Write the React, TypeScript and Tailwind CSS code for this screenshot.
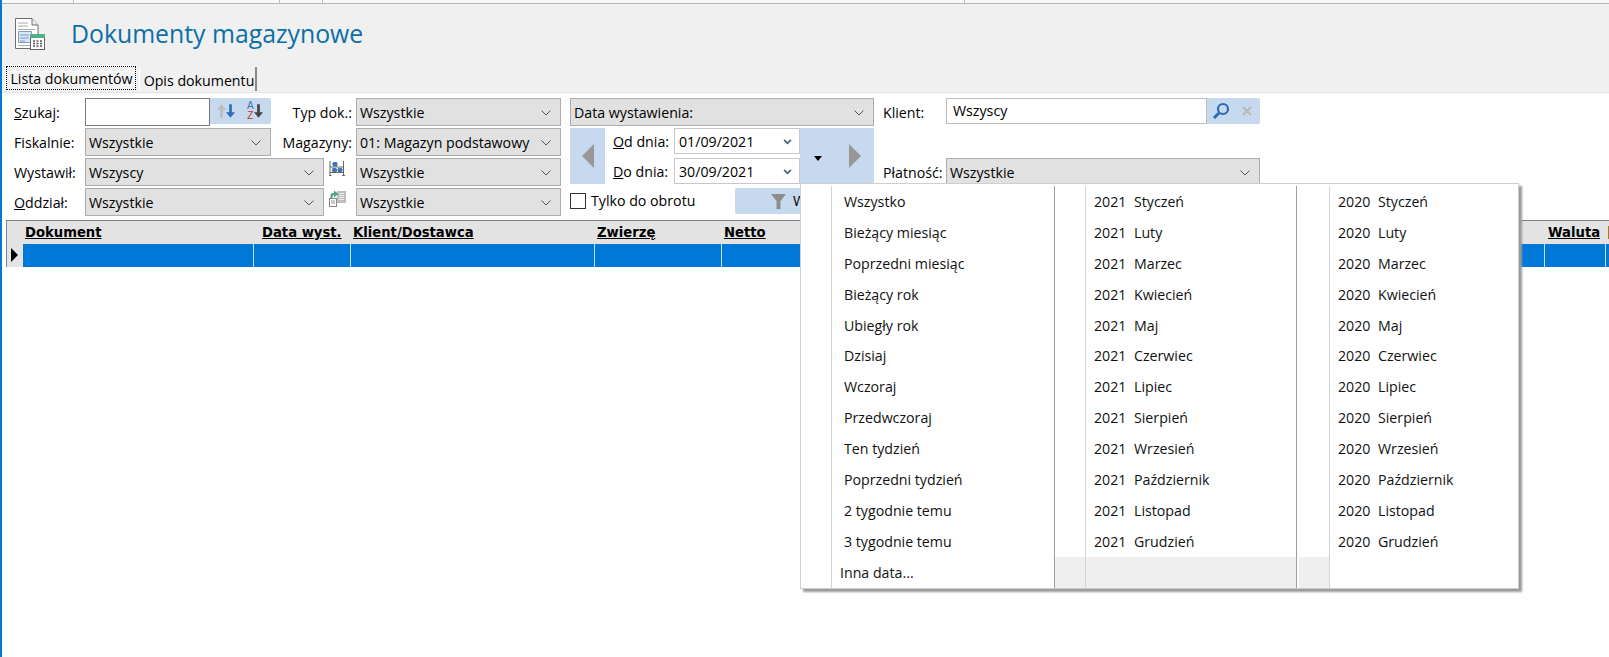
import type { ReactNode } from 'react'

const fontUi = "font-['Open_Sans','Noto_Sans',sans-serif]"

const menuLeft = [
  'Wszystko',
  'Bieżący miesiąc',
  'Poprzedni miesiąc',
  'Bieżący rok',
  'Ubiegły rok',
  'Dzisiaj',
  'Wczoraj',
  'Przedwczoraj',
  'Ten tydzień',
  'Poprzedni tydzień',
  '2 tygodnie temu',
  '3 tygodnie temu',
]

const months = [
  'Styczeń',
  'Luty',
  'Marzec',
  'Kwiecień',
  'Maj',
  'Czerwiec',
  'Lipiec',
  'Sierpień',
  'Wrzesień',
  'Październik',
  'Listopad',
  'Grudzień',
]

const columns = [
  { label: 'Dokument', width: 'w-[231px]', pad: 'pl-[2px]' },
  { label: 'Data wyst.', width: 'w-[97px]', pad: 'pl-[8px]' },
  { label: 'Klient/Dostawca', width: 'w-[244px]', pad: 'pl-[2px]' },
  { label: 'Zwierzę', width: 'w-[127px]', pad: 'pl-[2px]' },
  { label: 'Netto', width: 'w-[823px]', pad: 'pl-[2px]' },
  { label: 'Waluta', width: 'w-[61px]', pad: 'pl-[3px]' },
]

function Chevron() {
  return (
    <svg viewBox="0 0 10 6" className="w-[10px] h-[6px] shrink-0" fill="none" stroke="#555" strokeWidth="1">
      <path d="M.5.5 5 5 9.5.5" />
    </svg>
  )
}

function Combo({ value, className = '' }: { value: string; className?: string }) {
  return (
    <div className={`h-[28px] flex items-center justify-between pl-[3px] pr-[9px] pt-[2px] bg-[#e1e1e1] border border-[#adadad] text-[14.2px] ${className}`}>
      <span>{value}</span>
      <Chevron />
    </div>
  )
}

function Label({ children, className = '' }: { children: ReactNode; className?: string }) {
  return <div className={`h-[28px] pt-[2px] flex items-center text-[14.2px] ${className}`}>{children}</div>
}

function DateInput({ value }: { value: string }) {
  return (
    <div className="w-[126px] h-[26px] flex items-center justify-between pl-[4px] pr-[7px] pt-[2px] bg-white border border-[#c8c8c8] text-[14.2px]">
      <span>{value}</span>
      <svg viewBox="0 0 10 7" className="w-[9px] h-[6px]" fill="none" stroke="#47597d" strokeWidth="1.8">
        <path d="M1 1l4 4 4-4" />
      </svg>
    </div>
  )
}

function DocIcon() {
  return (
    <svg viewBox="0 0 30 32" className="w-[30px] h-[32px]">
      <path d="M.5.5H17L23 7V30.5H.5Z" fill="#fff" stroke="#6f6f6f" />
      <path d="M17 .5V7H23" fill="#eee" stroke="#6f6f6f" />
      <path d="M3 5h10M3 8h10" stroke="#aaa" />
      <path d="M3 11.500h17" stroke="#aaa" />
      <path d="M3.500 13.500h13v11h-13z" fill="#dbe5f3" stroke="#7d9cc9" />
      <path d="M5 17h9M5 20h9M5 23h5" stroke="#7d9cc9" />
      <path d="M3 27.500h12" stroke="#aaa" />
      <rect x="15.500" y="16.500" width="14" height="15" fill="#fff" stroke="#666" />
      <rect x="15" y="16" width="15" height="4" fill="#54ae88" />
      <path d="M18 23h2M21.500 23h2M25 23h2M18 25.500h2M21.500 25.500h2M25 25.500h2M18 28h2M21.500 28h2M25 28h2" stroke="#555" strokeWidth="1.300" />
    </svg>
  )
}

function Arrow({ color, up }: { color: string; up?: boolean }) {
  return (
    <svg viewBox="0 0 10 15" className="w-[9px] h-[16px] shrink-0">
      <path
        d={up ? 'M5 0 10 6H6.500V15H3.500V6H0Z' : 'M5 15 10 9H6.500V0H3.500V9H0Z'}
        fill={color}
      />
    </svg>
  )
}

function ShelfIcon() {
  return (
    <svg viewBox="0 0 16 15" className="w-[16px] h-[15px]">
      <path d="M1 0V14M14.500 0V14M1 6H14.500M1 11.500H14.500M0 14.500H2.500M13 14.500H16" stroke="#666" strokeWidth="1" fill="none" />
      <rect x="3.500" y="1" width="5" height="4.500" rx="1.500" fill="#3e74b5" />
      <rect x="3" y="7" width="5" height="4" rx="1.500" fill="#3e74b5" />
      <rect x="8.500" y="7" width="5" height="4" rx="1.500" fill="#3e74b5" />
    </svg>
  )
}

function TransferIcon() {
  return (
    <svg viewBox="0 0 17 17" className="w-[17px] h-[17px]">
      <rect x="8" y="1" width="9" height="12" fill="#bdbdbd" />
      <path d="M10 3.500h5M10 5.500h5M10 7.500h5M10 9.500h5" stroke="#eee" />
      <rect x=".5" y="8.500" width="7" height="8" fill="#fff" stroke="#888" />
      <path d="M2 11h4M2 13h4" stroke="#999" />
      <path d="M1.500 8V5C1.500 3.500 3 3 5 3V.5L9.500 4 5 7.500V5C4 5 3.500 6 3.500 8Z" fill="#4fa584" />
    </svg>
  )
}

function MenuColumn({ grayLast, children, className = '' }: { grayLast: boolean; children: ReactNode; className?: string }) {
  return (
    <div className={`flex flex-col h-full ${className}`}>
      {children}
      <div className={`h-[31px] flex ${grayLast ? 'bg-[#efefef]' : ''}`}>
        <div className="w-[31px] shrink-0 bg-[#efefef] border-r border-[#d4d4d4]" />
      </div>
    </div>
  )
}

function MenuItem({ children }: { children: ReactNode }) {
  return (
    <div className="h-[31px] flex items-center text-[14.2px]">
      <div className="w-[31px] h-full shrink-0 border-r border-[#d4d4d4]" />
      {children}
    </div>
  )
}

function YearColumn({ year, className }: { year: number; className: string }) {
  return (
    <MenuColumn grayLast={year === 2021} className={className}>
      {months.map((m) => (
        <MenuItem key={m}>
          <span className="ml-[8px] w-[40px] shrink-0">{year}</span>
          <span>{m}</span>
        </MenuItem>
      ))}
    </MenuColumn>
  )
}

function DateMenu() {
  return (
    <div className="absolute left-[800px] top-[183px] w-[719px] h-[406px] bg-white border border-[#cfcfcf] shadow-[3px_3px_2px_#9a9a9a] pt-[2px] flex text-[#111]">
      <div className="w-[254px] shrink-0 flex flex-col border-r border-[#9f9f9f]">
        {menuLeft.map((m) => (
          <MenuItem key={m}>
            <span className="ml-[12px]">{m}</span>
          </MenuItem>
        ))}
        <MenuItem>
          <span className="ml-[8px]">Inna data...</span>
        </MenuItem>
      </div>
      <YearColumn year={2021} className="w-[242px] shrink-0 border-r border-[#9f9f9f]" />
      <YearColumn year={2020} className="flex-1 ml-[2px]" />
    </div>
  )
}

export default function App() {
  return (
    <div className={`relative w-[1609px] h-[657px] overflow-hidden bg-white text-black flex ${fontUi}`}>
      <div className="w-[2px] bg-[#0078d7] shrink-0" />
      <div className="flex-1 min-w-0 flex flex-col">
        {/* Strip of the window behind */}
        <div className="h-[4px] bg-[#f8f8f8] border-b border-[#b5b5b5] flex">
          <div className="w-[72px] border-r border-[#bdbdbd]" />
          <div className="w-[206px] border-r border-[#bdbdbd]" />
          <div className="w-[43px] border-r border-[#bdbdbd]" />
          <div className="w-[642px] border-r border-[#bdbdbd]" />
        </div>

        {/* Title */}
        <div className="h-[88px] bg-[#f0f0f0]">
          <div className="flex items-center h-[60px] pl-[13px] gap-[27px]">
            <DocIcon />
            <h1 className="text-[24.8px] leading-none text-[#0d6fa8] -ml-[1px] -mt-[1px]">Dokumenty magazynowe</h1>
          </div>
          {/* Tabs */}
          <div className="flex items-start pl-[3px] h-[28px] text-[14.2px]">
            <div className="w-[132px] h-[26px] mt-[1px] bg-[#f4f4f4] border-t border-l border-white outline-1 outline-dotted outline-offset-[-2px] outline-black flex items-center justify-center">Lista dokumentów</div>
            <div className="w-[118px] h-[24px] mt-[3px] ml-[2px] pl-[3px] pt-[3px] bg-[#f0f0f0] border-l border-white border-r-2 border-r-[#8a8a8a] flex items-center justify-center">Opis dokumentu</div>
          </div>
        </div>
        <div className="h-[3px] bg-[#fafafa] border-t border-[#e4e4e4]" />

        {/* Filters */}
        <div className="pl-[4px] pt-[3px]">
          <div className="grid grid-cols-[71px_186px_85px_205px_9px_304px_72px_314px] grid-rows-[30px_30px_30px_30px] pl-[8px]">
            <Label><span><u>S</u>zukaj:</span></Label>
            <div className="flex h-[28px]">
              <div className="w-[125px] bg-white border border-[#7a7a7a]" />
              <div className="flex-1 h-[26px] bg-[#c6d9ee] rounded-r-[2px] flex items-center pl-[7px]">
                <Arrow color="#bdbdbd" up />
                <Arrow color="#2f6fb7" />
                <div className="ml-[12px] flex flex-col items-center text-[10px] leading-[10px] font-['Liberation_Sans',sans-serif]">
                  <span className="text-[#3e74b5]">A</span>
                  <span className="text-[#c8321e]">Z</span>
                </div>
                <Arrow color="#444" />
              </div>
            </div>
            <Label className="justify-end pr-[4px]">Typ dok.:</Label>
            <Combo value="Wszystkie" />
            <div />
            <Combo value="Data wystawienia:" />
            <Label className="pl-[9px]">Klient:</Label>
            <div className="flex h-[26px]">
              <div className="flex-1 bg-white border border-[#bdbdbd] pl-[6px] flex items-center text-[14.2px]">Wszyscy</div>
              <div className="w-[53px] bg-[#c6d9ee] rounded-r-[2px] flex items-center pl-[5px] gap-[12px]">
                <svg viewBox="0 0 18 18" className="w-[18px] h-[18px]" fill="none">
                  <circle cx="11" cy="7" r="5" stroke="#2a6cb0" strokeWidth="2.200" />
                  <path d="M7 11 2 16" stroke="#2a6cb0" strokeWidth="3" />
                </svg>
                <svg viewBox="0 0 10 10" className="w-[10px] h-[10px]" stroke="#b9b9b9" strokeWidth="2.200">
                  <path d="M1 1l8 8M9 1l-8 8" />
                </svg>
              </div>
            </div>

            <Label>Fiskalnie:</Label>
            <Combo value="Wszystkie" />
            <Label className="justify-end pr-[4px]">Magazyny:</Label>
            <Combo value="01: Magazyn podstawowy" />
            <div className="row-span-3" />
            {/* Date range */}
            <div className="row-span-3 flex flex-col">
              <div className="flex h-[56px]">
                <div className="w-[35px] bg-[#c6d9ee] flex items-center justify-center">
                  <svg viewBox="0 0 12 24" className="w-[12px] h-[24px]"><path d="M12 0V24L0 12Z" fill="#979797" /></svg>
                </div>
                <div className="w-[195px] flex flex-col gap-[4px] pl-[8px]">
                  <div className="flex items-center justify-between">
                    <span className="text-[14.2px] pt-[2px]"><u>O</u>d dnia:</span>
                    <DateInput value="01/09/2021" />
                  </div>
                  <div className="flex items-center justify-between">
                    <span className="text-[14.2px] pt-[2px]"><u>D</u>o dnia:</span>
                    <DateInput value="30/09/2021" />
                  </div>
                </div>
                <div className="flex-1 bg-[#c6d9ee] flex items-center pl-[14px] gap-[27px]">
                  <svg viewBox="0 0 8 5" className="w-[8px] h-[5px] mt-[4px]"><path d="M0 0H8L4 5Z" fill="#000" /></svg>
                  <svg viewBox="0 0 12 24" className="w-[12px] h-[24px]"><path d="M0 0V24L12 12Z" fill="#979797" /></svg>
                </div>
              </div>
              <div className="flex items-center h-[26px] mt-[4px]">
                <div className="w-[16px] h-[16px] bg-white border border-[#333]" />
                <span className="ml-[5px] text-[14.2px] w-[144px]">Tylko do obrotu</span>
                <div className="w-[139px] h-[26px] bg-[#c6d9ee] rounded-[2px] flex items-center pl-[36px] gap-[7px] text-[14.2px]">
                  <svg viewBox="0 0 15 15" className="w-[15px] h-[15px]"><path d="M0 0H15L9.500 7V15H5.500V7Z" fill="#8d8d8d" /></svg>
                  <span>W</span>
                </div>
              </div>
            </div>
            <div />
            <div />

            <Label>Wystawił:</Label>
            <Combo value="Wszyscy" className="col-span-2 w-[239px]" />
            <div className="col-start-4 row-start-3 relative">
              <div className="absolute left-[-27px] top-[3px]"><ShelfIcon /></div>
              <Combo value="Wszystkie" />
            </div>
            <Label className="col-start-7 row-start-3 pl-[9px]">Płatność:</Label>
            <Combo value="Wszystkie" className="col-start-8 row-start-3" />

            <Label className="col-start-1 row-start-4"><span><u>O</u>ddział:</span></Label>
            <Combo value="Wszystkie" className="col-start-2 col-span-2 row-start-4 w-[239px]" />
            <div className="col-start-4 row-start-4 relative">
              <div className="absolute left-[-27px] top-[2px]"><TransferIcon /></div>
              <Combo value="Wszystkie" />
            </div>
          </div>
        </div>

        {/* Table */}
        <div className="ml-[4px] mt-[2px] border-t border-l border-[#808080] w-fit">
          <div className="flex h-[23px] bg-[#e3e3e3] pl-[16px]">
            {columns.map((c) => (
              <div key={c.label} className={`${c.width} ${c.pad} shrink-0 flex items-center`}>
                <span className="underline font-bold text-[13.2px] font-['DejaVu_Sans',sans-serif]">{c.label}</span>
              </div>
            ))}
            <div className="w-[4px] flex items-center">
              <div className="ml-[2px] w-[1px] h-[13px] bg-[#a8772a]" />
            </div>
          </div>
          <div className="flex h-[23px] bg-[#e3e3e3] pl-[16px] relative">
            <div className="absolute left-[4px] top-[4px] w-0 h-0 border-y-[7px] border-y-transparent border-l-[7px] border-l-black" />
            {columns.map((c) => (
              <div key={c.label} className={`${c.width} shrink-0 bg-[#0078d7] border-r border-[#c9dff3]`} />
            ))}
            <div className="w-[4px] bg-[#0078d7]" />
          </div>
        </div>
      </div>
      <DateMenu />
    </div>
  )
}
